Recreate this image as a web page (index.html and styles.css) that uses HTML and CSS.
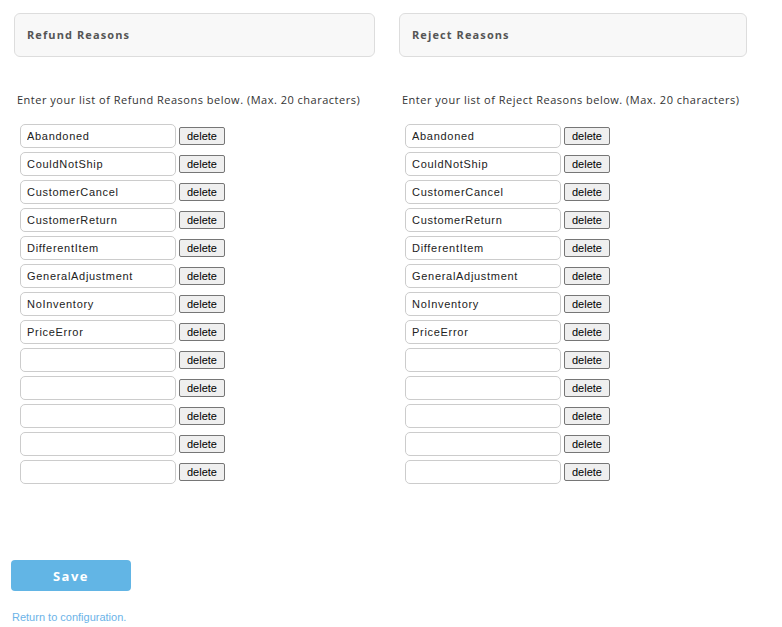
FILE: index.html
```html
<!DOCTYPE html>
<html lang="en">
  <head>
    <meta name="viewport" content="width=device-width, initial-scale=1.0" />
    <title>Reasons</title>
    <link rel="stylesheet" href="styles.css">
  </head>
  <body>
    <div class="columns">
      <div class="col col-left">
        <div class="panel-head">Refund Reasons</div>
        <p class="note">Enter your list of Refund Reasons below. (Max. 20 characters)</p>
        <div class="rows">
          <div class="row"><input type="text" value="Abandoned"><button>delete</button></div>
          <div class="row"><input type="text" value="CouldNotShip"><button>delete</button></div>
          <div class="row"><input type="text" value="CustomerCancel"><button>delete</button></div>
          <div class="row"><input type="text" value="CustomerReturn"><button>delete</button></div>
          <div class="row"><input type="text" value="DifferentItem"><button>delete</button></div>
          <div class="row"><input type="text" value="GeneralAdjustment"><button>delete</button></div>
          <div class="row"><input type="text" value="NoInventory"><button>delete</button></div>
          <div class="row"><input type="text" value="PriceError"><button>delete</button></div>
          <div class="row"><input type="text" value=""><button>delete</button></div>
          <div class="row"><input type="text" value=""><button>delete</button></div>
          <div class="row"><input type="text" value=""><button>delete</button></div>
          <div class="row"><input type="text" value=""><button>delete</button></div>
          <div class="row"><input type="text" value=""><button>delete</button></div>
        </div>
      </div>
      <div class="col col-right">
        <div class="panel-head">Reject Reasons</div>
        <p class="note">Enter your list of Reject Reasons below. (Max. 20 characters)</p>
        <div class="rows">
          <div class="row"><input type="text" value="Abandoned"><button>delete</button></div>
          <div class="row"><input type="text" value="CouldNotShip"><button>delete</button></div>
          <div class="row"><input type="text" value="CustomerCancel"><button>delete</button></div>
          <div class="row"><input type="text" value="CustomerReturn"><button>delete</button></div>
          <div class="row"><input type="text" value="DifferentItem"><button>delete</button></div>
          <div class="row"><input type="text" value="GeneralAdjustment"><button>delete</button></div>
          <div class="row"><input type="text" value="NoInventory"><button>delete</button></div>
          <div class="row"><input type="text" value="PriceError"><button>delete</button></div>
          <div class="row"><input type="text" value=""><button>delete</button></div>
          <div class="row"><input type="text" value=""><button>delete</button></div>
          <div class="row"><input type="text" value=""><button>delete</button></div>
          <div class="row"><input type="text" value=""><button>delete</button></div>
          <div class="row"><input type="text" value=""><button>delete</button></div>
        </div>
      </div>
    </div>

    <div class="actions">
      <button class="save">Save</button>
      <a class="back-link" href="#">Return to configuration.</a>
    </div>
  </body>
</html>
```

FILE: styles.css
```css
* {
  box-sizing: border-box;
}
body {
  margin: 0;
  background-color: #ffffff;
  font-family: "Open Sans", "Liberation Sans", sans-serif;
  color: #333333;
}
.columns {
  display: flex;
  gap: 24px;
  padding: 13px 0 0 14px;
}
.col-left {
  width: 361px;
}
.col-right {
  width: 348px;
}
.panel-head {
  height: 44px;
  line-height: 42px;
  padding-left: 12px;
  background-color: #f8f8f8;
  border: 1px solid #dddddd;
  border-radius: 6px;
  font-size: 11px;
  font-weight: bold;
  letter-spacing: 1.1px;
  color: #555555;
}
.note {
  margin: 36px 0 0 3px;
  font-size: 11px;
  line-height: 14px;
  letter-spacing: 0.5px;
  white-space: nowrap;
  color: #333333;
}
.rows {
  display: flex;
  flex-direction: column;
  gap: 4px;
  margin: 17px 0 0 6px;
}
.row {
  display: flex;
  align-items: center;
  gap: 3px;
}
.row input {
  width: 156px;
  height: 24px;
  margin: 0;
  padding: 0 6px;
  border: 1px solid #cccccc;
  border-radius: 5px;
  font-family: "Liberation Sans", Arial, sans-serif;
  font-size: 11px;
  letter-spacing: 0.7px;
  color: #222222;
  outline: none;
}
.row button {
  width: 46px;
  height: 18px;
  margin: 0;
  padding: 0;
  background-color: #efefef;
  border: 1px solid #767676;
  border-radius: 2px;
  font-family: "Liberation Sans", Arial, sans-serif;
  font-size: 11px;
  color: #000000;
}
.actions {
  display: flex;
  flex-direction: column;
  align-items: flex-start;
  padding: 76px 0 0 11px;
}
.save {
  width: 120px;
  height: 31px;
  background-color: #62b5e5;
  border: none;
  border-radius: 4px;
  color: #ffffff;
  font-family: "Open Sans", sans-serif;
  font-size: 13px;
  font-weight: bold;
  letter-spacing: 1.5px;
}
.back-link {
  margin: 20px 0 0 1px;
  font-family: "Liberation Sans", Arial, sans-serif;
  font-size: 11px;
  color: #6bb3e8;
  text-decoration: none;
}
```
